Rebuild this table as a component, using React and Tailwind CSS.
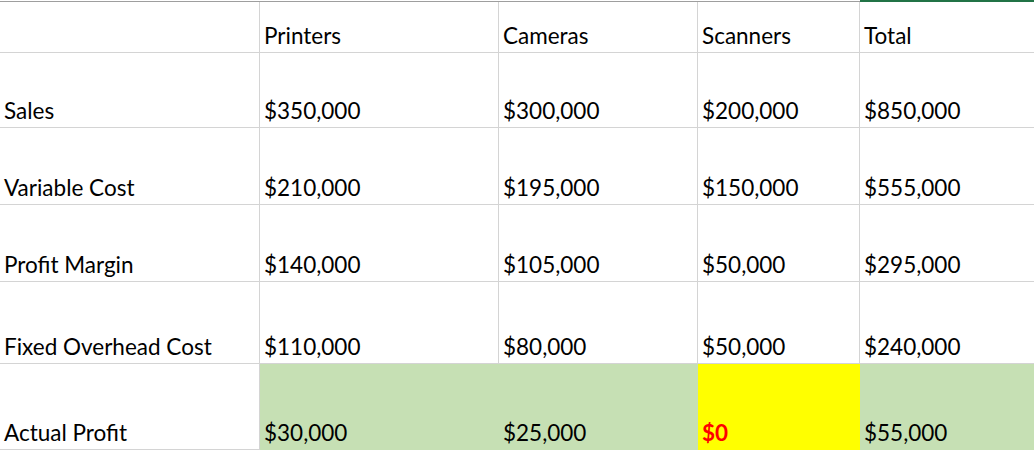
const columns = [
  { w: 'w-[260px]' },
  { w: 'w-[239px]' },
  { w: 'w-[199px]' },
  { w: 'w-[162px]' },
  { w: 'flex-1' },
];

const rows = [
  { h: 'h-[51px]', cells: ['', 'Printers', 'Cameras', 'Scanners', 'Total'] },
  { h: 'h-[75px]', cells: ['Sales', '$350,000', '$300,000', '$200,000', '$850,000'] },
  { h: 'h-[77px]', cells: ['Variable Cost', '$210,000', '$195,000', '$150,000', '$555,000'] },
  { h: 'h-[77px]', cells: ['Profit Margin', '$140,000', '$105,000', '$50,000', '$295,000'] },
  { h: 'h-[82px]', cells: ['Fixed Overhead Cost', '$110,000', '$80,000', '$50,000', '$240,000'] },
];

// last row has filled cells, so the grid lines under the fill are hidden
const profitRow = [
  { text: 'Actual Profit', cls: 'bg-white border-r border-b border-[#d4d4d4] text-black' },
  { text: '$30,000', cls: 'bg-[#c6e0b4] border-r border-b border-[#c6e0b4] text-black' },
  { text: '$25,000', cls: 'bg-[#c6e0b4] border-r border-b border-[#c6e0b4] text-black' },
  { text: '$0', cls: 'bg-[#ffff00] border-r border-b border-[#ffff00] text-[#ff0000] font-bold' },
  { text: '$55,000', cls: 'bg-[#c6e0b4] border-b border-[#c6e0b4] text-black' },
];

export default function App() {
  return (
    <div
      className="w-[1034px] h-[451px] bg-white overflow-hidden text-[22.5px] text-black"
      style={{ fontFamily: 'Lato, "Open Sans", sans-serif' }}
    >
      {/* ── column header edge ─────────────────────────── */}
      <div className="flex h-[2px]">
        <div className="w-[860px] h-[2px] border-b border-[#9e9e9e]" />
        <div className="flex-1 h-[2px] bg-[#217346]" />
      </div>

      {rows.map((row, ri) => (
        <div key={ri} className={`flex ${row.h}`}>
          {row.cells.map((text, ci) => (
            <div
              key={ci}
              className={`${columns[ci].w} flex items-end pl-1 pb-[5px] leading-none border-b border-[#d4d4d4] ${
                ci < 4 ? 'border-r' : ''
              }`}
            >
              {text}
            </div>
          ))}
        </div>
      ))}

      <div className="flex h-[86px]">
        {profitRow.map((cell, ci) => (
          <div
            key={ci}
            className={`${columns[ci].w} flex items-end pl-1 pb-[5px] leading-none ${cell.cls}`}
          >
            {cell.text}
          </div>
        ))}
      </div>
    </div>
  );
}
